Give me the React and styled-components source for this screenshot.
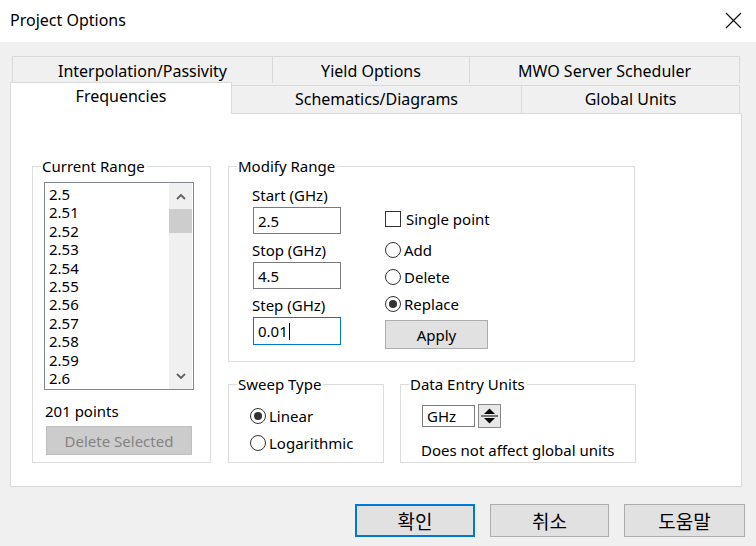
import React from 'react';
import styled, { createGlobalStyle } from 'styled-components';

const GlobalStyle = createGlobalStyle`
  html, body {
    margin: 0;
    padding: 0;
    background: #f0f0f0;
  }
  body {
    font-family: "Noto Sans", "Noto Sans CJK KR", sans-serif;
    font-size: 15px;
    color: #000;
  }
`;

const backTabs = [
  { label: 'Interpolation/Passivity', w: 261 },
  { label: 'Yield Options', w: 197 },
  { label: 'MWO Server Scheduler', w: 270 },
];

const frontTabs = [
  { label: 'Frequencies', w: 222, active: true },
  { label: 'Schematics/Diagrams', w: 290 },
  { label: 'Global Units', w: 218 },
];

const points = ['2.5', '2.51', '2.52', '2.53', '2.54', '2.55', '2.56', '2.57', '2.58', '2.59', '2.6'];

export default function App() {
  return (
    <>
      <GlobalStyle />
      <Window>
        <TitleBar>
          <Title>Project Options</Title>
          <Close>
            <svg width="17" height="17" viewBox="0 0 17 17">
              <path d="M1 1 L16 16 M16 1 L1 16" stroke="#111" strokeWidth="1.2" fill="none" />
            </svg>
          </Close>
        </TitleBar>

        <Body>
          <Tabs>
            <TabRow $back>
              {backTabs.map((t) => (
                <Tab key={t.label} $w={t.w}>{t.label}</Tab>
              ))}
            </TabRow>
            <TabRow>
              {frontTabs.map((t) => (
                <Tab key={t.label} $w={t.w} $active={t.active} $front>{t.label}</Tab>
              ))}
            </TabRow>
          </Tabs>

          <Panel>
            <Group $w={179}>
              <Legend>Current Range</Legend>
              <RangeContent>
                <ListBox>
                  <ListItems>
                    {points.map((p) => (
                      <ListItem key={p}>{p}</ListItem>
                    ))}
                  </ListItems>
                  <ScrollBar>
                    <ScrollArrow>
                      <svg width="10" height="7" viewBox="0 0 10 7">
                        <path d="M1 6 L5 2 L9 6" stroke="#606060" strokeWidth="1.8" fill="none" />
                      </svg>
                    </ScrollArrow>
                    <Thumb />
                    <ScrollTrack />
                    <ScrollArrow>
                      <svg width="10" height="7" viewBox="0 0 10 7">
                        <path d="M1 1 L5 5 L9 1" stroke="#606060" strokeWidth="1.8" fill="none" />
                      </svg>
                    </ScrollArrow>
                  </ScrollBar>
                </ListBox>
                <Count>201 points</Count>
                <Button $w={146} $h={29} $disabled>Delete Selected</Button>
              </RangeContent>
            </Group>

            <RightCol>
              <Group $w={407}>
                <Legend>Modify Range</Legend>
                <ModifyContent>
                  <FieldCol>
                    <FieldLabel>Start (GHz)</FieldLabel>
                    <TextBox $w={88} $h={27}>2.5</TextBox>
                    <FieldLabel $gap>Stop (GHz)</FieldLabel>
                    <TextBox $w={88} $h={27}>4.5</TextBox>
                    <FieldLabel $gap>Step (GHz)</FieldLabel>
                    <TextBox $w={88} $h={28} $focused>0.01<Caret /></TextBox>
                  </FieldCol>
                  <OptionCol>
                    <OptionRow $first>
                      <CheckBox />
                      <span>Single point</span>
                    </OptionRow>
                    <OptionRow>
                      <Radio />
                      <span>Add</span>
                    </OptionRow>
                    <OptionRow>
                      <Radio />
                      <span>Delete</span>
                    </OptionRow>
                    <OptionRow>
                      <Radio $checked />
                      <span>Replace</span>
                    </OptionRow>
                    <Button $w={103} $h={29}>Apply</Button>
                  </OptionCol>
                </ModifyContent>
              </Group>

              <BottomGroups>
                <Group $w={156}>
                  <Legend>Sweep Type</Legend>
                  <SweepContent>
                    <OptionRow>
                      <Radio $checked />
                      <span>Linear</span>
                    </OptionRow>
                    <OptionRow>
                      <Radio />
                      <span>Logarithmic</span>
                    </OptionRow>
                  </SweepContent>
                </Group>
                <Group $w={236}>
                  <Legend>Data Entry Units</Legend>
                  <UnitsContent>
                    <UnitRow>
                      <TextBox $w={53} $h={22}>GHz</TextBox>
                      <Spin>
                        <svg width="21" height="22" viewBox="0 0 21 22">
                          <path d="M5 9 L10.5 3.5 L16 9 Z" fill="#000" />
                          <path d="M2 11 H19" stroke="#000" strokeWidth="1" />
                          <path d="M5 13 L10.5 18.5 L16 13 Z" fill="#000" />
                        </svg>
                      </Spin>
                    </UnitRow>
                    <Note>Does not affect global units</Note>
                  </UnitsContent>
                </Group>
              </BottomGroups>
            </RightCol>
          </Panel>

          <ButtonRow>
            <Button $w={120} $h={33} $default $ko>확인</Button>
            <Button $w={119} $h={33} $ko>취소</Button>
            <Button $w={121} $h={33} $ko>도움말</Button>
          </ButtonRow>
        </Body>
      </Window>
    </>
  );
}

const Window = styled.div`
  width: 756px;
  height: 546px;
  background: #f0f0f0;
  overflow: hidden;
`;

const TitleBar = styled.div`
  height: 42px;
  background: #fff;
  display: flex;
  align-items: center;
  justify-content: space-between;
  padding: 0 14px 0 10px;
`;

const Title = styled.div`
  font-size: 16px;
  margin-top: -2px;
`;

const Close = styled.div`
  display: flex;
  margin-top: -2px;
`;

const Body = styled.div`
  padding: 14px 0 0 10px;
`;

const Tabs = styled.div`
  display: flex;
  flex-direction: column;
  font-size: 16px;
`;

const TabRow = styled.div`
  display: flex;
  align-items: flex-end;
  height: ${(p) => (p.$back ? '27px' : '30px')};
  margin-left: ${(p) => (p.$back ? '2px' : '0')};
`;

const Tab = styled.div`
  box-sizing: border-box;
  width: ${(p) => p.$w}px;
  height: ${(p) => (p.$active ? '32px' : p.$front ? '28px' : '27px')};
  margin-bottom: ${(p) => (p.$active ? '-1px' : '0')};
  position: relative;
  z-index: ${(p) => (p.$active ? 1 : 0)};
  background: ${(p) => (p.$active ? '#fff' : '#f0f0f0')};
  border: 1px solid #d9d9d9;
  border-bottom: ${(p) => (p.$back ? '1px solid #d9d9d9' : 'none')};
  & + & {
    border-left: none;
  }
  display: flex;
  justify-content: center;
  padding-top: ${(p) => (p.$active ? '2px' : p.$front ? '2px' : '3px')};
  line-height: 22px;
  white-space: nowrap;
`;

const Panel = styled.div`
  box-sizing: border-box;
  width: 732px;
  height: 374px;
  background: #fff;
  border: 1px solid #d9d9d9;
  padding: 42px 0 23px 21px;
  display: flex;
  align-items: stretch;
  gap: 17px;
`;

const Group = styled.fieldset`
  box-sizing: border-box;
  width: ${(p) => p.$w}px;
  margin: 0;
  padding: 0;
  min-width: 0;
  border: 1px solid #dcdcdc;
  display: flex;
  flex-direction: column;
`;

const Legend = styled.legend`
  margin-left: 8px;
  padding: 0 2px 0 1px;
  line-height: 20px;
  font-size: 15px;
`;

const RangeContent = styled.div`
  padding: 6px 0 0 11px;
  display: flex;
  flex-direction: column;
`;

const ListBox = styled.div`
  box-sizing: border-box;
  width: 150px;
  height: 208px;
  border: 1px solid #828790;
  display: flex;
  justify-content: space-between;
`;

const ListItems = styled.div`
  padding: 2px 0 0 4px;
  overflow: hidden;
`;

const ListItem = styled.div`
  line-height: 18.4px;
  height: 18.4px;
`;

const ScrollBar = styled.div`
  width: 23px;
  margin-right: 1px;
  background: #f0f0f0;
  display: flex;
  flex-direction: column;
`;

const ScrollArrow = styled.div`
  height: 26px;
  display: flex;
  align-items: center;
  justify-content: center;
`;

const Thumb = styled.div`
  height: 24px;
  background: #cdcdcd;
`;

const ScrollTrack = styled.div`
  flex: 1;
`;

const Count = styled.div`
  margin: 11px 0 0 1px;
  line-height: 20px;
`;

const Button = styled.div`
  box-sizing: border-box;
  width: ${(p) => p.$w}px;
  height: ${(p) => p.$h}px;
  margin-top: ${(p) => (p.$disabled ? '5px' : '0')};
  margin-left: ${(p) => (p.$disabled ? '2px' : '0')};
  background: ${(p) => (p.$disabled ? '#cccccc' : '#e1e1e1')};
  color: ${(p) => (p.$disabled ? '#838383' : '#000')};
  border: ${(p) => (p.$default ? '2px solid #0078d7' : p.$disabled ? '1px solid #bfbfbf' : '1px solid #adadad')};
  font-size: ${(p) => (p.$ko ? '19px' : '15px')};
  display: flex;
  align-items: center;
  justify-content: center;
  white-space: nowrap;
`;

const RightCol = styled.div`
  width: 408px;
  display: flex;
  flex-direction: column;
  gap: 12px;
`;

const ModifyContent = styled.div`
  display: flex;
  padding: 8px 0 12px 23px;
`;

const FieldCol = styled.div`
  width: 133px;
  display: flex;
  flex-direction: column;
`;

const FieldLabel = styled.div`
  line-height: 22px;
  margin-top: ${(p) => (p.$gap ? '5px' : '0')};
  margin-bottom: 1px;
`;

const TextBox = styled.div`
  box-sizing: border-box;
  width: ${(p) => p.$w}px;
  height: ${(p) => p.$h}px;
  margin-left: 1px;
  border: 1px solid ${(p) => (p.$focused ? '#0078d7' : '#7a7a7a')};
  background: #fff;
  padding-left: 4px;
  display: flex;
  align-items: center;
`;

const Caret = styled.span`
  width: 1px;
  height: 17px;
  background: #000;
  margin-left: 1px;
`;

const OptionCol = styled.div`
  display: flex;
  flex-direction: column;
  gap: 5px;
  padding-top: 24px;
`;

const OptionRow = styled.div`
  height: 22px;
  display: flex;
  align-items: center;
  gap: 3px;
  margin-bottom: ${(p) => (p.$first ? '4px' : '0')};
`;

const CheckBox = styled.span`
  box-sizing: border-box;
  width: 16px;
  height: 16px;
  border: 1px solid #333;
  background: #fff;
  margin-right: 2px;
`;

const Radio = styled.span`
  box-sizing: border-box;
  width: 16px;
  height: 16px;
  border-radius: 50%;
  border: 1px solid #333;
  background: #fff;
  display: flex;
  align-items: center;
  justify-content: center;
  &::after {
    content: '';
    width: 8px;
    height: 8px;
    border-radius: 50%;
    background: ${(p) => (p.$checked ? '#333' : 'transparent')};
  }
`;

const BottomGroups = styled.div`
  flex: 1;
  display: flex;
  gap: 16px;
`;

const SweepContent = styled.div`
  padding: 11px 0 0 21px;
  display: flex;
  flex-direction: column;
  gap: 5px;
`;

const UnitsContent = styled.div`
  padding: 11px 0 0 20px;
  display: flex;
  flex-direction: column;
`;

const UnitRow = styled.div`
  display: flex;
  align-items: flex-start;
  gap: 3px;
`;

const Spin = styled.div`
  box-sizing: border-box;
  width: 23px;
  height: 24px;
  border: 1px solid #8a8a8a;
  background: #e8e8e8;
  display: flex;
  margin-top: -1px;
`;

const Note = styled.div`
  margin-top: 12px;
  line-height: 20px;
`;

const ButtonRow = styled.div`
  display: flex;
  justify-content: flex-end;
  gap: 15px;
  margin-top: 17px;
  padding-right: 11px;
`;
